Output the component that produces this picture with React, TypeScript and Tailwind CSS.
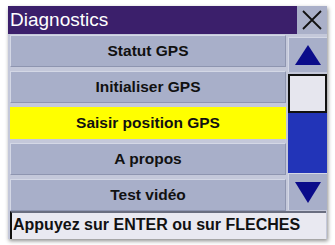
import React from "react";

const items = ["Statut GPS", "Initialiser GPS", "Saisir position GPS", "A propos", "Test vidéo"];
const selected = 2;

export default function App() {
  return (
    <div className="w-[335px] h-[245px] bg-white pl-[8px] pt-[6px] overflow-hidden" style={{ fontFamily: '"Liberation Sans", Arial, sans-serif' }}>
      <div className="w-[319px] h-[233px] bg-[#c4c8da] flex flex-col shadow-[1px_2px_4px_rgba(0,0,0,0.45)]">
        {/* title bar */}
        <div className="flex h-[28px]">
          <div className="flex-1 bg-[#3b1f6b] text-white text-[19px] leading-[28px] pl-[2px]">Diagnostics</div>
          <div className="w-[30px] bg-[#aab0c9] flex items-center justify-center">
            <svg width="22" height="22" viewBox="0 0 22 22">
              <path d="M2 2 L20 20 M20 2 L2 20" stroke="#111" strokeWidth="1.8" />
            </svg>
          </div>
        </div>
        {/* list + scrollbar */}
        <div className="flex h-[177px] pt-[1px]">
          <div className="w-[278px] pl-[2px] flex flex-col gap-[4px]">
            {items.map((t, i) => (
              <div
                key={t}
                className={
                  i === selected
                    ? "h-[32px] bg-[#ffff00] flex items-center justify-center text-[15.5px] font-bold text-[#111]"
                    : "h-[32px] bg-[#a8afc9] border-t border-l border-[#d4d8e6] border-b border-r border-b-[#8e95b0] border-r-[#8e95b0] flex items-center justify-center text-[15.5px] font-bold text-[#111]"
                }
              >
                {t}
              </div>
            ))}
          </div>
          <div className="flex-1 pl-[2px] flex flex-col pt-[2px]">
            <div className="h-[35px] bg-[#a8afc9] border-t border-l border-[#d4d8e6] flex items-center justify-center">
              <svg width="28" height="22" viewBox="0 0 28 22">
                <polygon points="14,1 27,21 1,21" fill="#0b0c8a" />
              </svg>
            </div>
            <div className="h-[39px] mt-[2px] bg-[#e6e6ee] border-2 border-[#111]" />
            <div className="h-[60px] bg-[#2234b8]" />
            <div className="h-[37px] bg-[#a8afc9] border-t border-l border-[#d4d8e6] flex items-center justify-center">
              <svg width="28" height="24" viewBox="0 0 28 24">
                <polygon points="1,2 27,2 14,23" fill="#0b0c8a" />
              </svg>
            </div>
          </div>
        </div>
        {/* footer */}
        <div className="h-[28px] ml-[2px] mr-[1px] bg-[#e9e9f1] border-t-2 border-l-2 border-t-[#6a6e80] border-l-[#111] text-[16px] font-bold text-[#111] leading-[24px] pl-[1px] whitespace-nowrap">
          Appuyez sur ENTER ou sur FLECHES
        </div>
      </div>
    </div>
  );
}
